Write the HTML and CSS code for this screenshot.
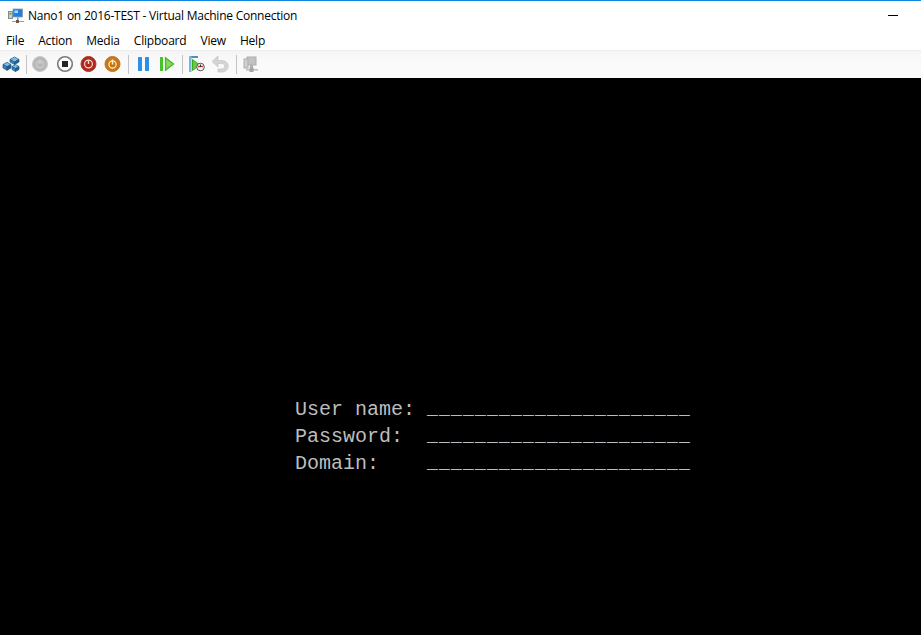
FILE: index.html
```
<!DOCTYPE html>
<html lang="en">
<head>
<meta charset="utf-8">
<title>Nano1 on 2016-TEST - Virtual Machine Connection</title>
<link rel="stylesheet" href="styles.css">
</head>
<body>
<div class="window">
  <header class="titlebar">
    <svg class="app-icon" width="16" height="16" viewBox="0 0 16 16">
      <rect x="0.5" y="3.500" width="4" height="7" fill="#c4d2bc" stroke="#7f8c84"/>
      <rect x="1.500" y="5" width="2" height="1.500" fill="#3cb04a"/>
      <rect x="5" y="1" width="9.500" height="8" fill="#1d7fe4" stroke="#8c9cab" stroke-width=".8"/>
      <rect x="6.500" y="2.500" width="3.500" height="2.500" fill="#a9dcff"/>
      <rect x="9" y="9.500" width="1.500" height="3" fill="#9c8a72"/>
      <rect x="4" y="13" width="13" height="1" fill="#b09e84"/>
      <rect x="8" y="12" width="3" height="3" fill="#6b5a48"/>
    </svg>
    <span class="title">Nano1 on 2016-TEST - Virtual Machine Connection</span>
    <span class="minimize"></span>
  </header>
  <nav class="menubar">
    <span>File</span><span>Action</span><span>Media</span><span>Clipboard</span><span>View</span><span>Help</span>
  </nav>
  <div class="toolbar">
    <svg class="tool tool-first" width="18" height="18" viewBox="0 0 18 18">
      <path d="M1 9.500l4-2.200 4 2.200-4 2.200z" fill="#7cc0ea" stroke="#1f5580" stroke-width=".7"/>
      <path d="M1 9.500v3.500l4 2.300v-3.600z" fill="#3b82b6" stroke="#1f5580" stroke-width=".7"/>
      <path d="M5 11.700v3.600l4-2.300v-3.500z" fill="#1f5f90" stroke="#1f5580" stroke-width=".7"/>
      <path d="M8 4.500l4.500-2.500 4.500 2.500-4.500 2.500z" fill="#7cc0ea" stroke="#1f5580" stroke-width=".7"/>
      <path d="M8 4.500v2.500l4.500 2.500v-2.500z" fill="#3b82b6" stroke="#1f5580" stroke-width=".7"/>
      <path d="M12.500 7v2.500l4.500-2.500v-2.500z" fill="#1f5f90" stroke="#1f5580" stroke-width=".7"/>
      <path d="M10 11.500l3.500-2 3.500 2-3.500 2z" fill="#7cc0ea" stroke="#1f5580" stroke-width=".7"/>
      <path d="M10 11.500v3l3.500 2v-3z" fill="#3b82b6" stroke="#1f5580" stroke-width=".7"/>
      <path d="M13.500 13.500v3l3.500-2v-3z" fill="#1f5f90" stroke="#1f5580" stroke-width=".7"/>
      <path d="M5.500 5.500l1.500 1" stroke="#e8f4fc" stroke-width="1.200"/>
    </svg>
    <i class="sep"></i>
    <svg class="tool" width="18" height="18" viewBox="0 0 18 18">
      <circle cx="9" cy="9" r="7.500" fill="#b8b8b8" stroke="#c8c8c8"/>
      <circle cx="9" cy="9.500" r="3.400" fill="none" stroke="#d6d6d6" stroke-width="1"/>
      <path d="M9 5v4" stroke="#d6d6d6" stroke-width="1.200"/>
    </svg>
    <svg class="tool tool-stop" width="18" height="18" viewBox="0 0 18 18">
      <circle cx="9" cy="9" r="7.300" fill="#fdfdfd" stroke="#7a7a7a" stroke-width="1.600"/>
      <rect x="6" y="6" width="6" height="6" fill="#262626"/>
    </svg>
    <svg class="tool" width="18" height="18" viewBox="0 0 18 18">
      <circle cx="9.500" cy="9" r="7.500" fill="#b0281a" stroke="#a03a2a"/>
      <circle cx="9.500" cy="9" r="3.900" fill="none" stroke="#f4dcd8" stroke-width="1.200"/>
      <path d="M9.500 5.500v3.500" stroke="#f4dcd8" stroke-width="1.400"/>
    </svg>
    <svg class="tool" width="18" height="18" viewBox="0 0 18 18">
      <circle cx="9.500" cy="9" r="7.500" fill="#c9780f" stroke="#b8742a"/>
      <circle cx="9.500" cy="9.500" r="3.600" fill="none" stroke="#fbeedb" stroke-width="1.200"/>
      <path d="M9.500 4.500v5" stroke="#fbeedb" stroke-width="1.400"/>
    </svg>
    <i class="sep"></i>
    <svg class="tool" width="18" height="18" viewBox="0 0 18 18">
      <rect x="5" y="2" width="4" height="14" rx=".6" fill="#2a90e8"/>
      <rect x="12" y="2" width="4" height="14" rx=".6" fill="#2a90e8"/>
    </svg>
    <svg class="tool" width="18" height="18" viewBox="0 0 18 18">
      <rect x="3" y="2" width="3" height="14" fill="#46c22c"/>
      <path d="M8.500 2.800l8 6.200-8 6.200z" fill="#82d95c" stroke="#3fb824" stroke-width="1.200"/>
    </svg>
    <i class="sep"></i>
    <svg class="tool" width="18" height="18" viewBox="0 0 18 18">
      <rect x="2" y="1" width="9" height="2" fill="#4d8fb8"/>
      <rect x="2" y="1" width="2.500" height="16" fill="#7ab6d6"/>
      <path d="M5.500 4.500l7 5.500-7 5.500z" fill="#62cf42" stroke="#39a822"/>
      <circle cx="13.500" cy="12" r="3.800" fill="#f4f4f4" stroke="#555"/>
      <path d="M11 11.500h5" stroke="#c8332a" stroke-width="1.400"/>
      <path d="M13.500 9.500v2.500" stroke="#333"/>
    </svg>
    <svg class="tool" width="18" height="18" viewBox="0 0 18 18">
      <path d="M7 1l-6 5.500 6 5.500v-3.500h4a2.700 2.700 0 0 1 0 5.500h-4v3h4.500a5.700 5.700 0 0 0 0-11.500h-4.500z" fill="#d4d4d4" stroke="#c0c0c0" stroke-width=".6"/>
    </svg>
    <i class="sep"></i>
    <svg class="tool" width="18" height="18" viewBox="0 0 18 18">
      <rect x="6" y="2" width="9" height="8" fill="#c2c2c2" stroke="#adadad"/>
      <rect x="3" y="4" width="4" height="9" fill="#cfcfcf" stroke="#adadad"/>
      <rect x="9" y="10" width="3" height="3" fill="#b0b0b0"/>
      <rect x="5" y="14" width="12" height="1.500" fill="#bcbcbc"/>
      <rect x="8.500" y="12.500" width="4" height="4.500" fill="#a4a4a4"/>
    </svg>
  </div>
  <main class="console">
    <pre class="login">User name: <span class="blank">______________________</span>
Password:  <span class="blank">______________________</span>
Domain:    <span class="blank">______________________</span></pre>
  </main>
</div>
</body>
</html>
```
FILE: styles.css
```
* { box-sizing: border-box; }
html, body { margin: 0; height: 100%; background: #000; }
.window { display: flex; flex-direction: column; height: 635px; overflow: hidden; font-family: "Open Sans", "Noto Sans", sans-serif; font-size: 12px; color: #000; }
.titlebar { display: flex; align-items: center; height: 30px; flex: none; padding-left: 8px; background: #fff; border-top: 1px solid #0c86e0; }
.app-icon { flex: none; margin-right: 4px; }
.title { flex: 1; white-space: nowrap; letter-spacing: -.23px; }
.minimize { width: 10px; height: 1px; margin-right: 23px; background: #000; }
.menubar { display: flex; gap: 14px; align-items: center; height: 20px; flex: none; padding-left: 6px; background: #fff; letter-spacing: -.2px; }
.toolbar { display: flex; align-items: center; height: 28px; flex: none; padding: 0 0 1px 2px; gap: 6px; background: linear-gradient(#f5f5f5, #f9f9f9 30%, #fafafa); border-top: 1px solid #eeeeee; }
.tool { flex: none; }
.tool-first { margin-right: -1px; }
.tool-stop { margin-left: 1px; margin-right: -1px; }
.sep { flex: none; width: 1px; height: 19px; background: #c4c4c4; margin: 0 -2px 0 1px; }
.console { flex: 1; display: flex; background: #000; padding: 318px 0 0 295px; }
.login { margin: 0; font-family: "Liberation Mono", "DejaVu Sans Mono", monospace; font-size: 20px; line-height: 27px; letter-spacing: 0; color: #bdbdbd; }
.blank { font-size: 18px; line-height: 1; letter-spacing: 1.2px; vertical-align: 1px; }
```
